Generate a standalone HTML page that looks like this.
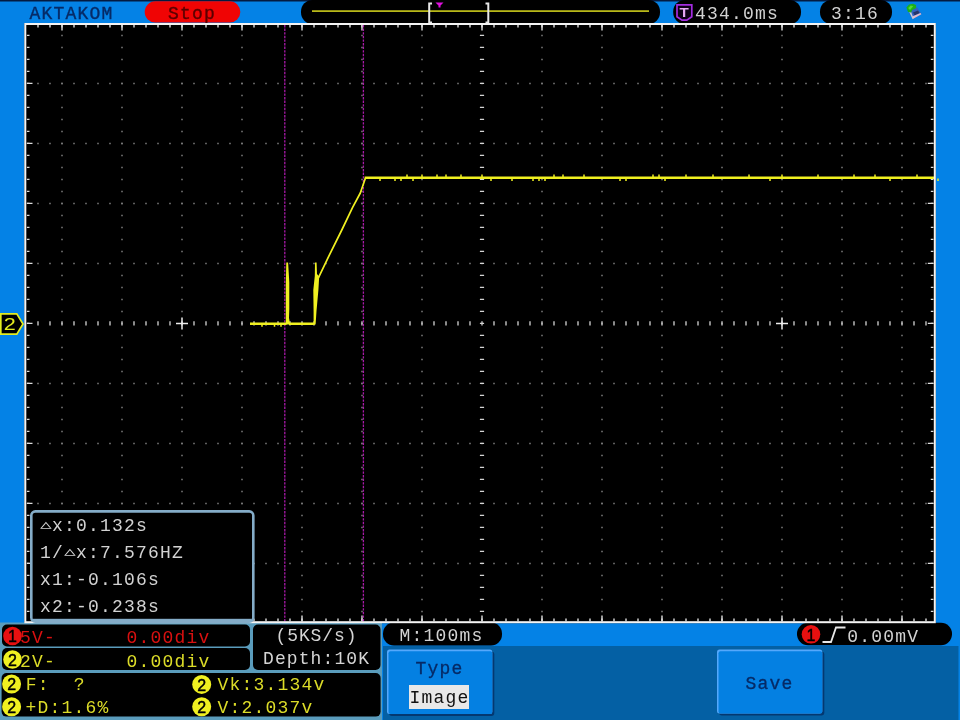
<!DOCTYPE html>
<html lang="en"><head><meta charset="utf-8"><title>AKTAKOM oscilloscope</title>
<style>html,body{margin:0;padding:0;background:#0482e6;overflow:hidden}svg{display:block;filter:blur(0.45px)}text{font-family:"Liberation Mono",monospace;white-space:pre}</style>
</head><body>
<svg width="960" height="720" viewBox="0 0 960 720">
<rect x="0" y="0" width="960" height="720" fill="#0482e6"/>
<rect x="0" y="0" width="960" height="1.5" fill="#041a40"/>
<text transform="translate(29.6,19.3) scale(1,1.0)" fill="#062a66" font-size="18" letter-spacing="1.20" xml:space="preserve" stroke="#062a66" stroke-width="0.35">AKTAKOM</text>
<rect x="144.7" y="1.3" width="95.6" height="21.2" rx="10.6" fill="#f00404"/>
<text transform="translate(167.9,18.6) scale(1,1.03)" fill="#5a0000" font-size="18" letter-spacing="1.20" xml:space="preserve" stroke="#5a0000" stroke-width="0.35">Stop</text>
<rect x="301" y="0" width="359" height="24" rx="11.5" fill="#000"/>
<rect x="312" y="10.3" width="337" height="1.6" fill="#cccc1c"/>
<path d="M432 3.5H429.2V22.5H432" fill="none" stroke="#e8e8e8" stroke-width="2"/>
<path d="M485.5 3.5H488.3V22.5H485.5" fill="none" stroke="#e8e8e8" stroke-width="2"/>
<path d="M435.5 2.5h8l-3 3v2h-2v-2z" fill="#e010e0"/>
<rect x="673.2" y="0" width="127.8" height="24" rx="11.5" fill="#000"/>
<path d="M677 4.8h14.8v12l-5 3.4h-4.8l-5 -3.4z" fill="#0c0014" stroke="#a42ce0" stroke-width="1.7"/>
<text transform="translate(684.2,17.3) scale(1.22,1)" fill="#e6a8f4" font-size="12.4" font-weight="bold" text-anchor="middle" style="font-family:'Liberation Sans',sans-serif">T</text>
<text transform="translate(695.0,19.1) scale(1,1.03)" fill="#d2d2d2" font-size="18" letter-spacing="1.20" xml:space="preserve" >434.0ms</text>
<rect x="820" y="0" width="72" height="24" rx="11.5" fill="#000"/>
<text transform="translate(831.1,19.1) scale(1,1.03)" fill="#d2d2d2" font-size="18" letter-spacing="1.20" xml:space="preserve" >3:16</text>
<g><path d="M911.5 9.5L917 7.3L921.6 14L913 19.2L909 13.5z" fill="#3262c0"/><path d="M913 12.6L918 10.4L919.6 13L914.6 15.6z" fill="#26366a"/><path d="M912.2 16.6L920.5 12.9L921.4 14.3L913.3 18.8z" fill="#e2bccc"/><path d="M909.2 12L911 11.8L913.6 18.4L912.6 19.2z" fill="#c4ccd8"/><path d="M906.4 7.5L909 4.5L913 3.7L916 5L916.2 8L912.3 10L911 12.6L908 12z" fill="#1eb01a"/><path d="M908.2 8l2.6 -2.4l2.4 0.6l-3.2 3.8z" fill="#54dc34"/></g>
<rect x="24.3" y="23" width="911.5" height="600.2" fill="#000"/>
<line x1="62" y1="34.65" x2="62" y2="620" stroke="#7e7e7e" stroke-width="1.5" stroke-dasharray="1.5 10.5"/>
<line x1="122" y1="34.65" x2="122" y2="620" stroke="#7e7e7e" stroke-width="1.5" stroke-dasharray="1.5 10.5"/>
<line x1="182" y1="34.65" x2="182" y2="620" stroke="#7e7e7e" stroke-width="1.5" stroke-dasharray="1.5 10.5"/>
<line x1="242" y1="34.65" x2="242" y2="620" stroke="#7e7e7e" stroke-width="1.5" stroke-dasharray="1.5 10.5"/>
<line x1="302" y1="34.65" x2="302" y2="620" stroke="#7e7e7e" stroke-width="1.5" stroke-dasharray="1.5 10.5"/>
<line x1="362" y1="34.65" x2="362" y2="620" stroke="#7e7e7e" stroke-width="1.5" stroke-dasharray="1.5 10.5"/>
<line x1="422" y1="34.65" x2="422" y2="620" stroke="#7e7e7e" stroke-width="1.5" stroke-dasharray="1.5 10.5"/>
<line x1="542" y1="34.65" x2="542" y2="620" stroke="#7e7e7e" stroke-width="1.5" stroke-dasharray="1.5 10.5"/>
<line x1="602" y1="34.65" x2="602" y2="620" stroke="#7e7e7e" stroke-width="1.5" stroke-dasharray="1.5 10.5"/>
<line x1="662" y1="34.65" x2="662" y2="620" stroke="#7e7e7e" stroke-width="1.5" stroke-dasharray="1.5 10.5"/>
<line x1="722" y1="34.65" x2="722" y2="620" stroke="#7e7e7e" stroke-width="1.5" stroke-dasharray="1.5 10.5"/>
<line x1="782" y1="34.65" x2="782" y2="620" stroke="#7e7e7e" stroke-width="1.5" stroke-dasharray="1.5 10.5"/>
<line x1="842" y1="34.65" x2="842" y2="620" stroke="#7e7e7e" stroke-width="1.5" stroke-dasharray="1.5 10.5"/>
<line x1="902" y1="34.65" x2="902" y2="620" stroke="#7e7e7e" stroke-width="1.5" stroke-dasharray="1.5 10.5"/>
<line x1="37.25" y1="83.4" x2="934" y2="83.4" stroke="#7e7e7e" stroke-width="1.5" stroke-dasharray="1.5 10.5"/>
<line x1="37.25" y1="143.4" x2="934" y2="143.4" stroke="#7e7e7e" stroke-width="1.5" stroke-dasharray="1.5 10.5"/>
<line x1="37.25" y1="203.4" x2="934" y2="203.4" stroke="#7e7e7e" stroke-width="1.5" stroke-dasharray="1.5 10.5"/>
<line x1="37.25" y1="263.4" x2="934" y2="263.4" stroke="#7e7e7e" stroke-width="1.5" stroke-dasharray="1.5 10.5"/>
<line x1="37.25" y1="383.4" x2="934" y2="383.4" stroke="#7e7e7e" stroke-width="1.5" stroke-dasharray="1.5 10.5"/>
<line x1="37.25" y1="443.4" x2="934" y2="443.4" stroke="#7e7e7e" stroke-width="1.5" stroke-dasharray="1.5 10.5"/>
<line x1="37.25" y1="503.4" x2="934" y2="503.4" stroke="#7e7e7e" stroke-width="1.5" stroke-dasharray="1.5 10.5"/>
<line x1="37.25" y1="563.4" x2="934" y2="563.4" stroke="#7e7e7e" stroke-width="1.5" stroke-dasharray="1.5 10.5"/>
<line x1="482" y1="34.75" x2="482" y2="620" stroke="#d4d4d4" stroke-width="4.2" stroke-dasharray="1.3 10.7" />
<line x1="37.35" y1="323.4" x2="934" y2="323.4" stroke="#d4d4d4" stroke-width="4.2" stroke-dasharray="1.3 10.7"/>
<line x1="37.3" y1="26.2" x2="934" y2="26.2" stroke="#dcdcdc" stroke-width="2.6" stroke-dasharray="1.4 10.6"/>
<line x1="37.3" y1="619.9" x2="934" y2="619.9" stroke="#dcdcdc" stroke-width="2.6" stroke-dasharray="1.4 10.6"/>
<line x1="28.2" y1="34.7" x2="28.2" y2="620" stroke="#dcdcdc" stroke-width="2.6" stroke-dasharray="1.4 10.6"/>
<line x1="932.1" y1="34.7" x2="932.1" y2="620" stroke="#dcdcdc" stroke-width="2.6" stroke-dasharray="1.4 10.6"/>
<line x1="61.3" y1="27.7" x2="934" y2="27.7" stroke="#dcdcdc" stroke-width="5.6" stroke-dasharray="1.4 58.6"/>
<line x1="61.3" y1="618.4" x2="934" y2="618.4" stroke="#dcdcdc" stroke-width="5.6" stroke-dasharray="1.4 58.6"/>
<line x1="29.7" y1="82.7" x2="29.7" y2="620" stroke="#dcdcdc" stroke-width="5.6" stroke-dasharray="1.4 58.6"/>
<line x1="930.6" y1="82.7" x2="930.6" y2="620" stroke="#dcdcdc" stroke-width="5.6" stroke-dasharray="1.4 58.6"/>
<path d="M176 323.4h12M182 317.4v12" stroke="#ececec" stroke-width="1.5" fill="none"/>
<path d="M776 323.4h12M782 317.4v12" stroke="#ececec" stroke-width="1.5" fill="none"/>
<line x1="284.8" y1="25" x2="284.8" y2="622" stroke="#a81aa8" stroke-width="1.3" stroke-dasharray="2.4 1.2"/>
<line x1="363.4" y1="25" x2="363.4" y2="622" stroke="#a81aa8" stroke-width="1.3" stroke-dasharray="2.4 1.2"/>
<path d="M250 323.7H286.5M289 323.7H314.5" fill="none" stroke="#f0f020" stroke-width="2.4"/>
<path d="M285.8 324.5V285L286.3 262.6H288.1L289.3 282V309L289 318L290.2 324.5z M313.6 324.5V312L313.3 290L314.8 276L315 262.6H316.6L317 274L319.2 276.5L318.4 290L316.5 311L315.6 324.5z" fill="#f0f020"/>
<polyline points="318.5,277.7 329.2,255.3 341.8,230 352.5,207.7 360.3,193 365.4,178.3" fill="none" stroke="#f0f020" stroke-width="1.7" stroke-linejoin="round"/>
<polyline points="364.6,177.8 935,177.8" fill="none" stroke="#f0f020" stroke-width="2.6"/>
<path d="M380 178.5v2.6M395 178.5v2.6M401 178.5v2.6M407 177v-2.6M413 178.5v2.6M422 177v-2.6M437 177v-2.6M446 177v-2.6M461 177v-2.6M482 177v-2.6M491 178.5v2.6M512 178.5v2.6M533 178.5v2.6M539 178.5v2.6M545 178.5v2.6M554 177v-2.6M563 177v-2.6M584 177v-2.6M620 178.5v2.6M626 178.5v2.6M653 177v-2.6M659 177v-2.6M665 178.5v2.6M686 177v-2.6M713 177v-2.6M749 177v-2.6M770 178.5v2.6M782 177v-2.6M818 177v-2.6M854 177v-2.6M875 177v-2.6M890 178.5v2.6M917 177v-2.6M938 178.5v2.6M262 324v2.8M274.5 324v2.8M281 324v2.8" stroke="#f0f020" stroke-width="1.5" fill="none"/>
<path d="M0.8 313.8h16l6.2 10.2l-6.2 10.2h-16z" fill="#000" stroke="#e4ec20" stroke-width="1.7"/>
<text transform="translate(9.7,330.2) scale(1.2,0.95)" fill="#e4ec20" font-size="18" text-anchor="middle" style="font-family:'Liberation Sans',sans-serif">2</text>
<rect x="0" y="622.5" width="382" height="97.5" fill="#5a9cbc"/>
<rect x="2" y="624.5" width="248" height="22" rx="5" fill="#000"/>
<text transform="translate(19.9,643) scale(1,1.03)" fill="#d81010" font-size="18" letter-spacing="1.20" xml:space="preserve" >5V-</text>
<circle cx="12.5" cy="636" r="9.3" fill="#e81010"/>
<text x="12.5" y="642.3" fill="#000" stroke="#000" stroke-width="0.4" font-size="16" text-anchor="middle" style="font-family:'Liberation Sans',sans-serif">1</text>
<text transform="translate(126.6,643) scale(1,1.03)" fill="#d81010" font-size="18" letter-spacing="1.20" xml:space="preserve" >0.00div</text>
<rect x="2" y="648" width="248" height="22" rx="5" fill="#000"/>
<text transform="translate(19.9,666.5) scale(1,1.03)" fill="#dcdc28" font-size="18" letter-spacing="1.20" xml:space="preserve" >2V-</text>
<circle cx="12.5" cy="659.5" r="9.3" fill="#f0f020"/>
<text x="12.5" y="665.8" fill="#000" stroke="#000" stroke-width="0.4" font-size="16" text-anchor="middle" style="font-family:'Liberation Sans',sans-serif">2</text>
<text transform="translate(126.6,666.5) scale(1,1.03)" fill="#dcdc28" font-size="18" letter-spacing="1.20" xml:space="preserve" >0.00div</text>
<rect x="253" y="624.5" width="127.5" height="45.5" rx="5" fill="#000"/>
<text transform="translate(275.5,640.5) scale(1,1.03)" fill="#d4d4d4" font-size="18" letter-spacing="0.90" xml:space="preserve" >(5KS/s)</text>
<text transform="translate(263.0,663.5) scale(1,1.03)" fill="#d4d4d4" font-size="18" letter-spacing="1.10" xml:space="preserve" >Depth:10K</text>
<rect x="1.6" y="673" width="379" height="43.6" rx="5" fill="#000"/>
<circle cx="11.6" cy="684" r="9.5" fill="#f0f020"/>
<text x="11.6" y="690.3" fill="#000" stroke="#000" stroke-width="0.4" font-size="16" text-anchor="middle" style="font-family:'Liberation Sans',sans-serif">2</text>
<text transform="translate(25.8,690) scale(1,1.03)" fill="#dcdc28" font-size="18" letter-spacing="1.20" xml:space="preserve" >F:  ?</text>
<circle cx="11.6" cy="706.7" r="9.5" fill="#f0f020"/>
<text x="11.6" y="713.0" fill="#000" stroke="#000" stroke-width="0.4" font-size="16" text-anchor="middle" style="font-family:'Liberation Sans',sans-serif">2</text>
<text transform="translate(25.6,712.5) scale(1,1.03)" fill="#dcdc28" font-size="18" letter-spacing="1.20" xml:space="preserve" >+D:1.6%</text>
<circle cx="201.7" cy="684.4" r="9.5" fill="#f0f020"/>
<text x="201.7" y="690.6999999999999" fill="#000" stroke="#000" stroke-width="0.4" font-size="16" text-anchor="middle" style="font-family:'Liberation Sans',sans-serif">2</text>
<text transform="translate(217.6,690) scale(1,1.03)" fill="#dcdc28" font-size="18" letter-spacing="1.20" xml:space="preserve" >Vk:3.134v</text>
<circle cx="201.7" cy="706.7" r="9.5" fill="#f0f020"/>
<text x="201.7" y="713.0" fill="#000" stroke="#000" stroke-width="0.4" font-size="16" text-anchor="middle" style="font-family:'Liberation Sans',sans-serif">2</text>
<text transform="translate(217.6,712.5) scale(1,1.03)" fill="#dcdc28" font-size="18" letter-spacing="1.20" xml:space="preserve" >V:2.037v</text>
<rect x="383" y="622.6" width="119" height="22.9" rx="11" fill="#000"/>
<text transform="translate(399.6,640.8) scale(1,1.03)" fill="#d2d2d2" font-size="18" letter-spacing="1.20" xml:space="preserve" >M:100ms</text>
<rect x="797" y="622.8" width="155" height="22.5" rx="11" fill="#000"/>
<circle cx="811" cy="634.3" r="9.3" fill="#e81010"/>
<text x="811" y="640.5999999999999" fill="#000" stroke="#000" stroke-width="0.4" font-size="16" text-anchor="middle" style="font-family:'Liberation Sans',sans-serif">1</text>
<path d="M822.5 642h8.5l5 -14.5h9.5" fill="none" stroke="#e8e8e8" stroke-width="1.8"/>
<text transform="translate(847.3,641.5) scale(1,1.03)" fill="#d2d2d2" font-size="18" letter-spacing="1.20" xml:space="preserve" >0.00mV</text>
<rect x="383" y="646" width="575.5" height="74" fill="#0460a4"/>
<rect x="389" y="651.4" width="105.3" height="64.6" rx="3" fill="#043870"/>
<rect x="387" y="649.4" width="105.3" height="64.6" rx="2.5" fill="#54a8fc"/>
<rect x="388.5" y="651.1999999999999" width="103.8" height="62.8" rx="2" fill="#0480e2"/>
<text transform="translate(415.6,674.3) scale(1,1.03)" fill="#062a66" font-size="18" letter-spacing="1.20" xml:space="preserve" stroke="#062a66" stroke-width="0.3">Type</text>
<rect x="409" y="685" width="60" height="24" fill="#e8e8e8"/>
<text transform="translate(409.6,703) scale(1,1.03)" fill="#101010" font-size="18" letter-spacing="1.20" xml:space="preserve" >Image</text>
<rect x="719" y="651.4" width="105.3" height="64.2" rx="3" fill="#043870"/>
<rect x="717" y="649.4" width="105.3" height="64.2" rx="2.5" fill="#54a8fc"/>
<rect x="718.5" y="651.1999999999999" width="103.8" height="62.400000000000006" rx="2" fill="#0480e2"/>
<text transform="translate(745.6,689) scale(1,1.03)" fill="#062a66" font-size="18" letter-spacing="1.20" xml:space="preserve" stroke="#062a66" stroke-width="0.3">Save</text>
<rect x="25.3" y="24" width="909.5" height="598.2" fill="none" stroke="#f4f4f4" stroke-width="2"/>
<rect x="31.3" y="511.4" width="222" height="110.2" rx="4" fill="#000" stroke="#84acc8" stroke-width="2.6"/>
<rect x="33" y="618.8" width="218.6" height="3" fill="#84acc8"/>
<text transform="translate(40.3,528.3) scale(1,0.6)" fill="#d2d2d2" font-size="19" style="font-family:'DejaVu Sans Mono','DejaVu Sans',monospace">△</text>
<text transform="translate(52.1,530.7) scale(1,1.03)" fill="#d2d2d2" font-size="18" letter-spacing="1.20" xml:space="preserve" >x:0.132s</text>
<text transform="translate(40.1,557.5) scale(1,1.03)" fill="#d2d2d2" font-size="18" letter-spacing="1.20" xml:space="preserve" >1/</text>
<text transform="translate(64.3,555) scale(1,0.6)" fill="#d2d2d2" font-size="19" style="font-family:'DejaVu Sans Mono','DejaVu Sans',monospace">△</text>
<text transform="translate(76.1,557.5) scale(1,1.03)" fill="#d2d2d2" font-size="18" letter-spacing="1.20" xml:space="preserve" >x:7.576HZ</text>
<text transform="translate(40.1,585.3) scale(1,1.03)" fill="#d2d2d2" font-size="18" letter-spacing="1.20" xml:space="preserve" >x1:-0.106s</text>
<text transform="translate(40.1,611.9) scale(1,1.03)" fill="#d2d2d2" font-size="18" letter-spacing="1.20" xml:space="preserve" >x2:-0.238s</text>
</svg></body></html>
